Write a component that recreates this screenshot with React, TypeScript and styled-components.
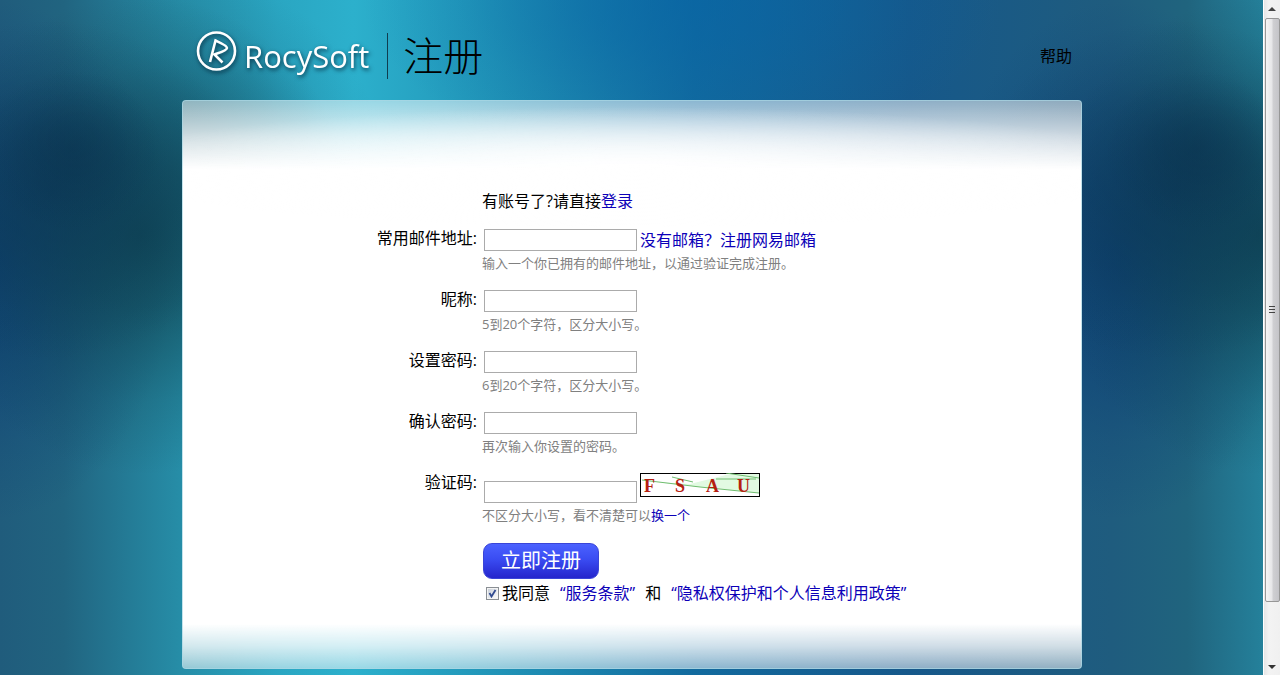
import React from 'react';
import styled, { createGlobalStyle } from 'styled-components';

const GlobalStyle = createGlobalStyle`
  *, *::before, *::after { box-sizing: border-box; }
  html, body, #root { height: 100%; }
  body {
    margin: 0;
    overflow: hidden;
    font-family: "Open Sans", "Noto Sans CJK SC", sans-serif;
    font-size: 16px;
    line-height: 24px;
    color: #000;
  }
`;

const Screen = styled.div`
  display: flex;
  height: 100%;
`;

const glow = (size: string, at: string, rgb: string, alpha: number) =>
  `radial-gradient(${size} at ${at}, rgba(${rgb}, ${alpha}), rgba(${rgb}, ${alpha * 0.75}) 30%, rgba(${rgb}, ${alpha * 0.25}) 70%, rgba(${rgb}, 0))`;

// One repeat of the dark cloud, drawn at the given left position.
const cloud = (left: string) =>
  [
    glow('90px 80px', `calc(${left} + 72px) 150px`, '8, 44, 72', 0.4),
    glow('200px 170px', `calc(${left} + 50px) 190px`, '10, 52, 84', 0.6),
    glow('220px 240px', `calc(${left} + 140px) 235px`, '15, 68, 82', 0.9),
    glow('180px 260px', `calc(${left} - 5px) 260px`, '12, 62, 116', 0.9),
  ].join(',');

const Page = styled.div`
  flex: 1;
  min-width: 0;
  overflow: hidden;
  padding: 0 24px 0 25px;
  background:
    ${cloud('0%')},
    ${cloud('89%')},
    ${glow('180px 180px', '16% 24%', '22, 88, 112', 0.5)},
    ${glow('320px 160px', '54% 0%', '6, 100, 166', 0.6)},
    linear-gradient(90deg, #205c7c 0%, #216480 5%, #268ca6 14%, #2aa6c2 22%, #2cb0cc 28%, #2092b6 40%, #126a9e 55%, #16588a 72%, #1f5c7e 88%, #20647e 94%, #268aa4 102%);
`;

const Content = styled.div`
  width: 100%;
  max-width: 900px;
  margin: 0 auto;
`;

const Header = styled.header`
  display: flex;
  align-items: center;
  height: 100px;
  padding: 12px 10px 0 12px;
`;

const Brand = styled.a`
  display: flex;
  align-items: center;
  gap: 6px;
  color: #fff;
  text-decoration: none;
  filter: drop-shadow(1px 2px 2px rgba(0, 30, 50, 0.8));
`;

const BrandName = styled.span`
  font-size: 31px;
  font-weight: 500;
  line-height: 40px;
`;

const Title = styled.h1`
  margin: 0 0 0 18px;
  padding-left: 15px;
  border-left: 1px solid #0f3d50;
  font-size: 40px;
  line-height: 46px;
  font-weight: 200;
`;

const HelpLink = styled.a`
  margin-left: auto;
  color: #000;
  text-decoration: none;
`;

const Card = styled.main`
  min-height: 569px;
  padding: 88px 20px 48px 0;
  border: 1px solid rgba(170, 215, 228, 0.7);
  border-radius: 4px;
  background:
    radial-gradient(ellipse 60% 60px at 50% 66px, #fff, rgba(255, 255, 255, 0)),
    linear-gradient(180deg, rgba(255, 255, 255, 0.52) 0, rgba(255, 255, 255, 0.8) 36px, #fff 68px, #fff calc(100% - 44px), rgba(255, 255, 255, 0.8) calc(100% - 22px), rgba(255, 255, 255, 0.52) 100%);
`;

const Form = styled.form`
  display: grid;
  grid-template-columns: 294px 1fr;
  column-gap: 5px;
`;

const Label = styled.label`
  text-align: right;
`;

const Cell = styled.div<{ $space?: number }>`
  grid-column: 2;
  margin-bottom: ${(p) => p.$space ?? 0}px;
`;

const Control = styled.div`
  display: flex;
  align-items: flex-end;
  gap: 3px;
  padding: 3px 0 0 2px;
  line-height: 22px;
`;

const TextInput = styled.input`
  width: 153px;
  height: 22px;
  padding: 1px 4px;
  border: 1px solid #ababab;
  background: #fff;
  font: inherit;
`;

const Hint = styled.p`
  margin: 0;
  font-size: 13px;
  line-height: 24px;
  color: #808080;
`;

const Link = styled.a`
  color: #0c00b8;
  text-decoration: none;
`;

const Captcha = styled.svg`
  display: block;
  margin-bottom: 6px;
`;

const Submit = styled.button`
  display: block;
  width: 116px;
  height: 36px;
  margin-left: 1px;
  padding: 0;
  border: 1px solid #3a45d8;
  border-radius: 9px;
  background: linear-gradient(180deg, #4b62ff, #3a4cf2 45%, #2525cc);
  color: #fff;
  font-family: inherit;
  font-size: 20px;
  line-height: 32px;
`;

const Agreement = styled.div`
  display: flex;
  align-items: center;
  padding-left: 4px;
  line-height: 28px;
`;

const Tick = styled.input`
  appearance: none;
  width: 13px;
  height: 13px;
  margin: 0 3px 0 0;
  border: 1px solid #8a8f94;
  background: linear-gradient(135deg, #c5ccd6, #fff);
  box-shadow: inset 0 0 0 1px #f4f4f4;
  &:checked {
    background:
      url("data:image/svg+xml,%3Csvg xmlns='http://www.w3.org/2000/svg' viewBox='0 0 11 11'%3E%3Cpath d='M2.5 5l2 3.5L8.5 2' fill='none' stroke='%23304a90' stroke-width='1.8'/%3E%3C/svg%3E"),
      linear-gradient(135deg, #c5ccd6, #fff);
  }
`;

const Terms = styled(Link)`
  margin: 0 10px;
`;

const Scrollbar = styled.div`
  display: flex;
  flex-direction: column;
  align-items: center;
  width: 17px;
  border-left: 1px solid #fff;
  background: linear-gradient(90deg, #e6e6e6, #f3f3f3 30%, #f0f0f0);
`;

const Arrow = styled.svg`
  display: block;
  width: 16px;
  height: 17px;
`;

const Thumb = styled.div`
  display: flex;
  align-items: center;
  justify-content: center;
  width: 15px;
  flex: 0 1 584px;
  margin: 1px 0 auto;
  border: 1px solid #979797;
  border-radius: 2px;
  background: linear-gradient(90deg, #f5f5f5, #e6e6e8 45%, #cfcfd2 55%, #c4c4c8);
`;

const fields = [
  { id: 'email', label: '常用邮件地址:', type: 'email', hint: '输入一个你已拥有的邮件地址，以通过验证完成注册。', link: '没有邮箱？注册网易邮箱' },
  { id: 'nick', label: '昵称:', type: 'text', hint: '5到20个字符，区分大小写。' },
  { id: 'password', label: '设置密码:', type: 'password', hint: '6到20个字符，区分大小写。' },
  { id: 'confirm', label: '确认密码:', type: 'password', hint: '再次输入你设置的密码。' },
];

const letters = ['F', 'S', 'A', 'U'];

export default function App() {
  return (
    <Screen>
      <GlobalStyle />
      <Page>
        <Content>
          <Header>
            <Brand href="#">
              <svg width="44" height="50" viewBox="0 0 44 50" fill="none" stroke="#fff" aria-hidden="true">
                <circle cx="22.500" cy="20" r="18.500" strokeWidth="2.600" />
                <path d="M16 31 21.500 9.500C27 12 33 14.500 33 17C33 19.500 26 21.500 20.500 23.500L28.500 31.500" strokeWidth="2.600" />
              </svg>
              <BrandName>RocySoft</BrandName>
            </Brand>
            <Title>注册</Title>
            <HelpLink href="#">帮助</HelpLink>
          </Header>
          <Card>
            <Form onSubmit={(e) => e.preventDefault()}>
              <Cell $space={13}>
                有账号了?请直接<Link href="#">登录</Link>
              </Cell>
              {fields.map((f) => (
                <React.Fragment key={f.id}>
                  <Label htmlFor={f.id}>{f.label}</Label>
                  <Cell $space={12}>
                    <Control>
                      <TextInput id={f.id} type={f.type} />
                      {f.link && <Link href="#">{f.link}</Link>}
                    </Control>
                    <Hint>{f.hint}</Hint>
                  </Cell>
                </React.Fragment>
              ))}
              <Label htmlFor="code">验证码:</Label>
              <Cell $space={16}>
                <Control>
                  <TextInput id="code" type="text" />
                  <Captcha width="120" height="24" viewBox="0 0 120 24" role="img" aria-label="验证码">
                    <rect x="0.500" y="0.500" width="119" height="23" fill="#fff" stroke="#000" />
                    <path d="M15 9 50 11 90 1H119V20L60 14Z" fill="#e2fae2" />
                    <path d="M2 7 60 14 119 20M32 4 53 9M76 6H116M86 0 119 5" fill="none" stroke="#70bd70" />
                    {letters.map((c, i) => (
                      <text key={c} x={4 + i * 31} y="19" fill="#b52010" fontFamily="Liberation Serif, serif" fontWeight="700" fontSize="18">{c}</text>
                    ))}
                  </Captcha>
                </Control>
                <Hint>
                  不区分大小写，看不清楚可以<Link href="#">换一个</Link>
                </Hint>
              </Cell>
              <Cell>
                <Submit type="submit">立即注册</Submit>
                <Agreement>
                  <Tick id="agree" type="checkbox" defaultChecked />
                  <label htmlFor="agree">我同意</label>
                  <Terms href="#">“服务条款”</Terms>和
                  <Terms href="#">“隐私权保护和个人信息利用政策”</Terms>
                </Agreement>
              </Cell>
            </Form>
          </Card>
        </Content>
      </Page>
      <Scrollbar aria-hidden="true">
        <Arrow viewBox="0 0 16 17"><path d="M4 11 8 7 12 11Z" fill="#444" /></Arrow>
        <Thumb>
          <svg width="8" height="8" viewBox="0 0 8 8"><path d="M1 0.500H7M1 3.500H7M1 6.500H7" stroke="#444" /></svg>
        </Thumb>
        <Arrow viewBox="0 0 16 17"><path d="M4 7 8 11 12 7Z" fill="#333" /></Arrow>
      </Scrollbar>
    </Screen>
  );
}
